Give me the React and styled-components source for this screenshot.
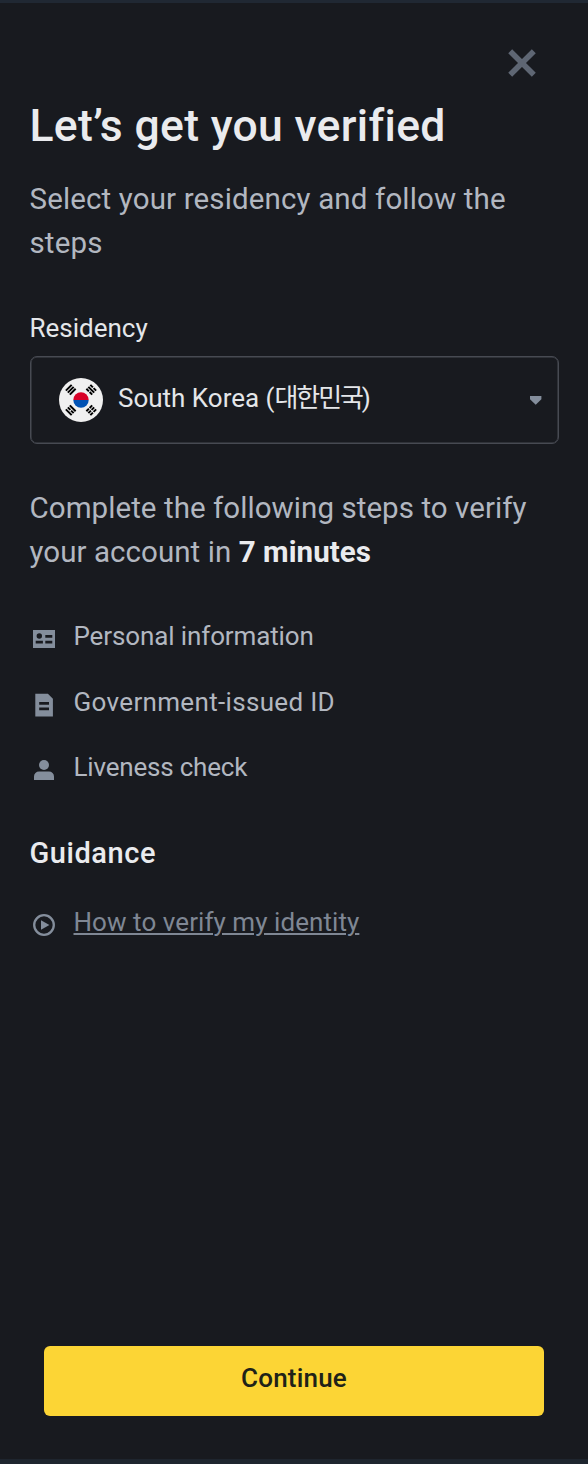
import styled, { createGlobalStyle } from 'styled-components';

const steps = [
	{ icon: 'card', label: 'Personal information', gap: 30, spacing: -0.12 },
	{ icon: 'doc', label: 'Government-issued ID', gap: 29, spacing: 0.33 },
	{ icon: 'user', label: 'Liveness check', gap: 0, spacing: -0.2 },
];

const Icon = ({ name }) => (
	<IconSvg viewBox="0 0 24 24">
		{name === 'card' && (
			<path
				fillRule="evenodd"
				d="M1 3h22v18H1zM7.3 6.3a2.7 2.7 0 1 0 0 5.4a2.7 2.7 0 0 0 0-5.4zM13.3 8v2.8h7V8zM3.7 13.8v2.8h7.2v-2.8zM13.3 13.8v2.8h7v-2.8z"
			/>
		)}
		{name === 'doc' && (
			<path
				fillRule="evenodd"
				d="M3.3.8h12.6l5 5v17.6H3.3zM7.2 9v2.7h9.8V9zM7.2 14.6v2.7h9.8v-2.7z"
			/>
		)}
		{name === 'user' && (
			<>
				<circle cx="12" cy="7" r="5" />
				<path d="M2 22v-3.4a5 5 0 0 1 5-5h10a5 5 0 0 1 5 5V22z" />
			</>
		)}
		{name === 'play' && (
			<>
				<circle cx="12" cy="12" r="9.8" fill="none" stroke="currentColor" strokeWidth="2.3" />
				<path d="M9 7.3v9.4l8.4-4.7z" />
			</>
		)}
	</IconSvg>
);

// each trigram is three bars, 1 = solid and 0 = broken, outermost first
const trigrams = [
	{ angle: -45, bars: [1, 1, 1] },
	{ angle: 45, bars: [0, 1, 0] },
	{ angle: 135, bars: [0, 0, 0] },
	{ angle: 225, bars: [1, 0, 1] },
];

const Flag = () => (
	<FlagSvg viewBox="-22 -22 44 44">
		<circle r="22" fill="#f0f0f0" />
		<path d="M-7.7 0a7.7 7.7 0 0 1 15.4 0z" fill="#d80027" />
		<path d="M-7.7 0a7.7 7.7 0 0 0 15.4 0z" fill="#0052b4" />
		{trigrams.map(({ angle, bars }) => (
			<g key={angle} transform={`rotate(${angle})`} stroke="#000" strokeWidth="2">
				{bars.map((solid, i) => (
					<path
						key={i}
						d={solid ? `M-4.1 ${-17.3 + i * 2.8}h8.2` : `M-4.1 ${-17.3 + i * 2.8}h3.6m1 0h3.6`}
					/>
				))}
			</g>
		))}
	</FlagSvg>
);

const App = () => (
	<Page>
		<GlobalStyle />
		<TopBar>
			<CloseButton aria-label="Close">
				<svg width="28" height="28" viewBox="0 0 28 28">
					<path d="M2.2 2.2l23.6 23.6M25.8 2.2L2.2 25.8" stroke="#5e6673" strokeWidth="5.6" />
				</svg>
			</CloseButton>
		</TopBar>
		<Content>
			<Title>Let’s get you verified</Title>
			<Lead>Select your residency and follow the steps</Lead>
			<Label>Residency</Label>
			<Select>
				<Flag />
				<Country>
					South Korea (<Native>대한민국</Native>)
				</Country>
				<svg width="12" height="9" viewBox="0 0 12 9">
					<path d="M0 0h11.4v3.2L5.7 8.7 0 3.2z" fill="#848e9c" />
				</svg>
			</Select>
			<Intro>
				Complete the following steps to verify
				<br />
				<span>your account in </span>
				<strong>7 minutes</strong>
			</Intro>
			{steps.map((step) => (
				<Row key={step.icon} $gap={step.gap}>
					<Icon name={step.icon} />
					<RowText $spacing={step.spacing}>{step.label}</RowText>
				</Row>
			))}
			<Heading>Guidance</Heading>
			<Row $gap={0}>
				<Icon name="play" />
				<RowLink href="#">How to verify my identity</RowLink>
			</Row>
		</Content>
		<Footer>
			<ContinueButton>Continue</ContinueButton>
		</Footer>
	</Page>
);

const GlobalStyle = createGlobalStyle`
	* {
		box-sizing: border-box;
	}
	body {
		margin: 0;
		background: #181a1f;
		font-family: Roboto, 'Noto Sans CJK KR', sans-serif;
	}
`;
const Page = styled.div`
	display: flex;
	flex-direction: column;
	width: 588px;
	height: 1464px;
	border-top: 3px solid #202833;
	border-bottom: 5px solid #1e252e;
	background: #181a1f;
`;
const TopBar = styled.header`
	display: flex;
	justify-content: flex-end;
	height: 95px;
	padding: 45.6px 52px 0 0;
`;
const CloseButton = styled.button`
	width: 28px;
	height: 28px;
	padding: 0;
	border: none;
	background: none;
	svg {
		display: block;
	}
`;
const Content = styled.main`
	flex: 1;
	display: flex;
	flex-direction: column;
	padding: 0 29.5px;
`;
const Title = styled.h1`
	margin: 0 0 23px;
	font-size: 44.5px;
	font-weight: 500;
	line-height: 56px;
	letter-spacing: 0.32px;
	color: #eaebee;
`;
const Lead = styled.p`
	margin: 0 0 44.5px;
	font-size: 29.5px;
	line-height: 44px;
	letter-spacing: 0.14px;
	color: #b2b7c0;
`;
const Label = styled.label`
	margin-bottom: 10.5px;
	font-size: 26px;
	line-height: 36px;
	color: #e4e6e9;
`;
const Select = styled.div`
	display: flex;
	align-items: center;
	height: 88px;
	margin-bottom: 42px;
	padding: 0 16px 0 28.5px;
	border: 1px solid #474a52;
	border-radius: 7px;
	box-shadow: inset 0 0 0 0.5px #474a52;
`;
const FlagSvg = styled.svg`
	width: 44px;
	height: 44px;
	margin-right: 15px;
`;
const Country = styled.span`
	flex: 1;
	padding-bottom: 5px;
	font-size: 26px;
	line-height: 36px;
	color: #e4e6e9;
`;
const Native = styled.span`
	letter-spacing: -2.1px;
`;
const Intro = styled.p`
	margin: 0 0 44px;
	font-size: 29.5px;
	line-height: 44px;
	letter-spacing: 0.06px;
	color: #b2b7c0;
	strong {
		font-weight: 700;
		color: #eaebee;
	}
`;
const Row = styled.div`
	display: flex;
	align-items: center;
	height: 36px;
	margin-bottom: ${({ $gap }) => $gap}px;
	padding-left: 2.5px;
`;
const IconSvg = styled.svg`
	width: 24px;
	height: 24px;
	margin: 5px 17.5px 0 0;
	color: #848e9c;
	fill: currentColor;
`;
const RowText = styled.span`
	font-size: 26px;
	line-height: 36px;
	letter-spacing: ${({ $spacing }) => $spacing}px;
	color: #b2b7c0;
`;
const Heading = styled.h2`
	margin: 48px 0 31px;
	font-size: 29px;
	font-weight: 500;
	line-height: 40px;
	letter-spacing: 0.55px;
	color: #eaebee;
`;
const RowLink = styled.a`
	font-size: 26px;
	line-height: 36px;
	letter-spacing: 0.06px;
	color: #7f8794;
	text-decoration: underline;
	text-decoration-thickness: 2px;
	text-underline-offset: 2px;
`;
const Footer = styled.footer`
	padding: 0 44px 43.5px;
`;
const ContinueButton = styled.button`
	display: block;
	width: 100%;
	height: 69.5px;
	padding: 0 0 5px;
	border: none;
	border-radius: 6px;
	background: #fcd535;
	font-family: inherit;
	font-size: 26px;
	font-weight: 500;
	letter-spacing: 0.2px;
	color: #202218;
`;

export default App;
